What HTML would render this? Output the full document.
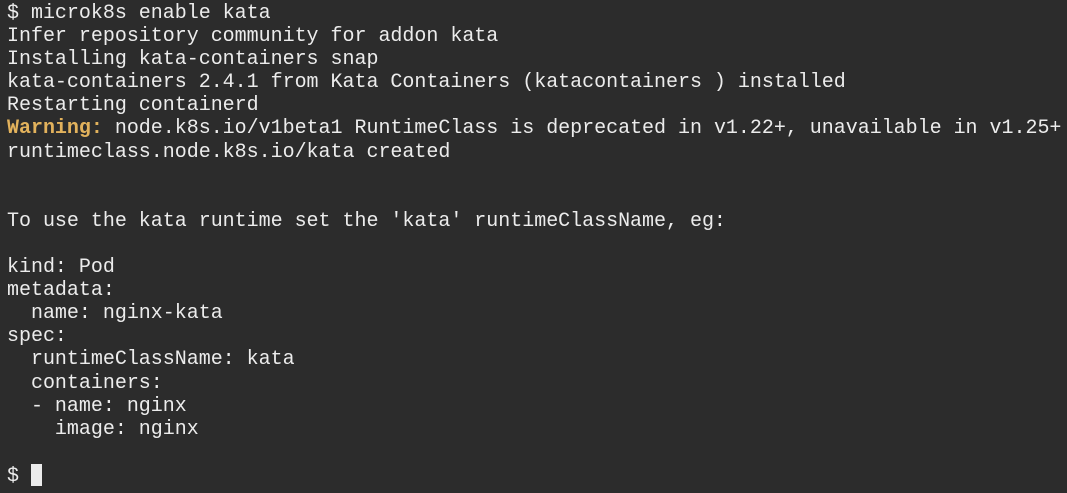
<!DOCTYPE html>
<html><head><style>
html,body{margin:0;padding:0;background:#2c2c2c;width:1067px;height:493px;overflow:hidden}
pre{margin:0;position:absolute;left:7px;top:2px;font-family:"Liberation Mono",monospace;font-size:20px;line-height:23.1px;color:#ececec;letter-spacing:-0.02px}
.w{color:#e2b25c;font-weight:bold}
.c{display:inline-block;width:11px;height:22px;background:#ececec;vertical-align:-5px}
</style></head><body>
<pre>$ microk8s enable kata
Infer repository community for addon kata
Installing kata-containers snap
kata-containers 2.4.1 from Kata Containers (katacontainers ) installed
Restarting containerd
<span class="w">Warning:</span> node.k8s.io/v1beta1 RuntimeClass is deprecated in v1.22+, unavailable in v1.25+
runtimeclass.node.k8s.io/kata created


To use the kata runtime set the 'kata' runtimeClassName, eg:

kind: Pod
metadata:
  name: nginx-kata
spec:
  runtimeClassName: kata
  containers:
  - name: nginx
    image: nginx

$ <span class="c"></span></pre>
</body></html>
